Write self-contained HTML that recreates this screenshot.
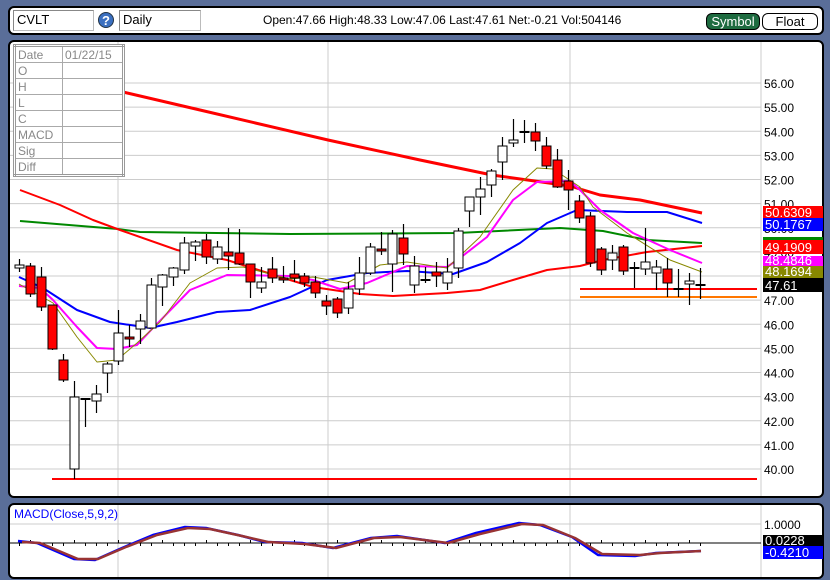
<!DOCTYPE html>
<html><head><meta charset="utf-8"><style>
body{margin:0;width:830px;height:580px;background:#5a6e99;overflow:hidden;font-family:"Liberation Sans",Arial,sans-serif;position:relative}
.box{position:absolute;background:#fff;border:2px solid #000;border-radius:6px;box-sizing:border-box}
.inp{position:absolute;border:1px solid #bbb;border-top-color:#888;border-left-color:#888;background:#fff;font-size:13px;box-sizing:border-box;padding:1px 3px}
.btn{position:absolute;border:1px solid #000;border-radius:6px;font-size:13px;text-align:center;box-sizing:border-box;line-height:15px}
table{position:absolute;left:13px;top:44px;border-collapse:collapse;border:3px double #999;font-size:12px;color:#888;background:#fff}
td{border:1px solid #aaa;height:15px;padding:0 2px;line-height:14px}
</style></head><body>
<div class="box" style="left:8px;top:6px;width:816px;height:29px"></div>
<div class="inp" style="left:13px;top:10px;width:81px;height:21px">CVLT</div>
<div style="position:absolute;left:98px;top:12px;width:16px;height:16px;border-radius:50%;background:#3a6fc0;border:1px solid #234;color:#fff;font-size:13px;font-weight:bold;text-align:center;line-height:16px;box-sizing:border-box">?</div>
<div class="inp" style="left:119px;top:10px;width:82px;height:21px">Daily</div>
<div style="position:absolute;left:263px;top:13px;font-size:12px;color:#000;white-space:nowrap">Open:47.66 High:48.33 Low:47.06 Last:47.61 Net:-0.21 Vol:504146</div>
<div class="btn" style="left:706px;top:13px;width:54px;height:17px;background:#1e6b40;color:#fff">Symbol</div>
<div class="btn" style="left:762px;top:13px;width:56px;height:17px;background:#fff;color:#000">Float</div>
<div class="box" style="left:8px;top:40px;width:816px;height:458px"></div>
<div class="box" style="left:8px;top:503px;width:816px;height:76px"></div>
<svg id="s" width="830" height="580" style="position:absolute;left:0;top:0" font-family="Liberation Sans, Arial, sans-serif"></svg>
<table>
<tr><td style="width:42px">Date</td><td style="width:55px">01/22/15</td></tr>
<tr><td>O</td><td></td></tr><tr><td>H</td><td></td></tr><tr><td>L</td><td></td></tr>
<tr><td>C</td><td></td></tr><tr><td>MACD</td><td></td></tr><tr><td>Sig</td><td></td></tr><tr><td>Diff</td><td></td></tr>
</table>
<script>
var o='';
function pl(pts,c,w){o+='<polyline fill="none" stroke="'+c+'" stroke-width="'+w+'" stroke-linejoin="round" points="'+pts+'"/>';}
// grid
[118,328,570,761].forEach(function(x){o+='<line x1="'+x+'" y1="42" x2="'+x+'" y2="496" stroke="#ccc"/>';o+='<line x1="'+x+'" y1="505" x2="'+x+'" y2="577" stroke="#ccc"/>';});
for(var p=40;p<=56;p++){var y=83+(56-p)*24.125;o+='<line x1="10" y1="'+y+'" x2="761" y2="'+y+'" stroke="#ccc"/>';o+='<text x="764" y="'+(y+5)+'" font-size="12">'+p+'.00</text>';}
// horizontal lines
o+='<line x1="52" y1="479" x2="757" y2="479" stroke="#f00" stroke-width="2"/>';
o+='<line x1="580" y1="289" x2="757" y2="289" stroke="#f00" stroke-width="2"/>';
o+='<line x1="580" y1="297" x2="757" y2="297" stroke="#f70" stroke-width="2"/>';
// MAs
pl("123,92 200,110 328,140 420,160 492,175 570,186 600,195 640,200 702,213","#f00",3);
pl("20,221 118,229 140,232 290,234 457,233 560,228 603,231 647,240 702,243","#080",2);
pl("20,190 60,205 93,220 120,230 177,250 227,260 290,280 313,287 360,294 393,296 447,293 480,290 513,280 547,270 580,266 603,260 647,252 702,246","#f00",2);
pl("19,277 43,288 77,310 110,322 150,328 177,322 217,312 250,310 290,297 327,280 367,273 407,271 453,274 487,262 520,243 547,223 577,210 627,212 667,212 702,223","#00f",2);
pl("19,286 40,288 53,300 77,327 97,348 117,349 137,345 153,328 190,290 227,275 290,276 313,280 340,289 367,283 407,266 447,267 460,258 487,237 513,200 537,182 570,181 580,190 600,210 633,233 670,250 702,263","#f0f",2);
pl("19,284 53,303 77,337 97,362 117,360 137,343 160,322 190,283 217,268 243,267 290,279 313,277 347,283 380,265 407,262 447,268 480,237 513,190 537,168 553,169 580,187 593,207 627,233 670,260 702,272","#880",1);
// candles [bodyTop,bodyBot,high,low,color]
var c=[[265,268,259,272,0],[266,294,263,297,1],[277,307,267,311,1],[305,349,305,350,1],[360,380,354,382,1],[397,469,381,479,0],[398,400,398,427,2],[394,401,385,413,0],[364,373,362,393,0],[333,361,310,365,0],[337,339,325,347,1],[321,329,314,344,0],[285,328,278,328,0],[275,287,274,306,0],[268,277,267,286,0],[243,270,237,274,0],[242,246,240,261,0],[240,257,234,264,1],[247,259,241,264,0],[252,256,228,270,1],[253,264,229,265,1],[264,282,264,298,1],[282,288,267,293,0],[269,278,257,283,1],[278,280,266,283,1],[274,278,260,282,1],[276,283,273,287,1],[282,293,276,298,1],[301,306,295,315,1],[299,313,297,318,1],[289,308,282,314,0],[273,289,257,295,0],[247,273,243,275,0],[249,251,232,255,1],[234,264,230,292,0],[238,254,224,265,1],[266,285,256,293,0],[279,281,267,283,2],[272,276,262,287,1],[272,283,258,290,0],[231,268,228,278,0],[197,211,197,227,0],[189,197,177,215,0],[171,185,169,197,0],[146,162,137,180,0],[140,143,119,147,0],[131,133,120,143,2],[132,141,123,151,1],[146,166,137,169,1],[160,187,149,188,1],[181,190,170,210,1],[201,218,195,223,1],[216,263,212,267,1],[249,270,247,275,1],[253,260,245,270,0],[247,271,245,275,1],[267,269,262,288,2],[262,269,228,275,0],[267,273,260,290,0],[269,283,258,297,1],[288,290,269,297,2],[281,284,273,305,0],[284,286,268,299,2]];
c.forEach(function(d,i){var x=Math.round(19+i*10.98)+0.5;
o+='<line x1="'+x+'" y1="'+d[2]+'" x2="'+x+'" y2="'+d[3]+'" stroke="#000" stroke-width="1.2"/>';
if(d[4]==2){o+='<rect x="'+(x-5)+'" y="'+(d[0])+'" width="10" height="2" fill="#000"/>';}
else o+='<rect x="'+(x-4.5)+'" y="'+d[0]+'" width="9" height="'+Math.max(2,d[1]-d[0])+'" fill="'+(d[4]?'#f00':'#fff')+'" stroke="#000" stroke-width="1"/>';});
// tags
function tag(y,h,bg,fg,t){o+='<rect x="763" y="'+y+'" width="60" height="'+h+'" fill="'+bg+'"/><text x="765" y="'+(y+h-2)+'" font-size="13" fill="'+fg+'">'+t+'</text>';}
tag(206,13,"#f00","#fff","50.6309");tag(218,13,"#00f","#fff","50.1767");
o+='<rect x="763" y="237" width="60" height="3" fill="#080"/>';
tag(240,14,"#f00","#fff","49.1909");tag(256,11,"#f0f","#fff","48.4846");tag(266,12,"#880","#fff","48.1694");tag(278,14,"#000","#fff","47.61");
// MACD
o+='<text x="14" y="518" font-size="12" fill="#00f">MACD(Close,5,9,2)</text>';
o+='<line x1="10" y1="524" x2="761" y2="524" stroke="#ccc"/><text x="764" y="529" font-size="12">1.0000</text>';
o+='<line x1="10" y1="543" x2="761" y2="543" stroke="#000"/>';
for(var i=0;i<63;i++){var x=Math.round(19+i*10.98)+0.5;o+='<line x1="'+x+'" y1="543" x2="'+x+'" y2="'+(i%4==1?540:546)+'" stroke="#000"/>';}
pl("18,541 37,543 74,559 95,560 122,548 153,535 185,527 206,528 238,535 265,542 302,543 333,548 371,538 397,536 445,543 476,533 519,523 540,525 572,537 598,555 635,556 656,553 701,551","#00f",2.5);
pl("22,542 40,543 78,559 98,559 126,547 157,535 188,528 210,529 242,536 268,542 305,544 336,548 374,538 400,537 448,543 480,534 522,524 543,525 575,538 602,554 640,555 660,553 701,551","#933",2.5);
tag(535,12,"#000","#fff","0.0228");tag(546,13,"#00f","#fff","-0.4210");
document.getElementById('s').innerHTML=o;
</script>
</body></html>
